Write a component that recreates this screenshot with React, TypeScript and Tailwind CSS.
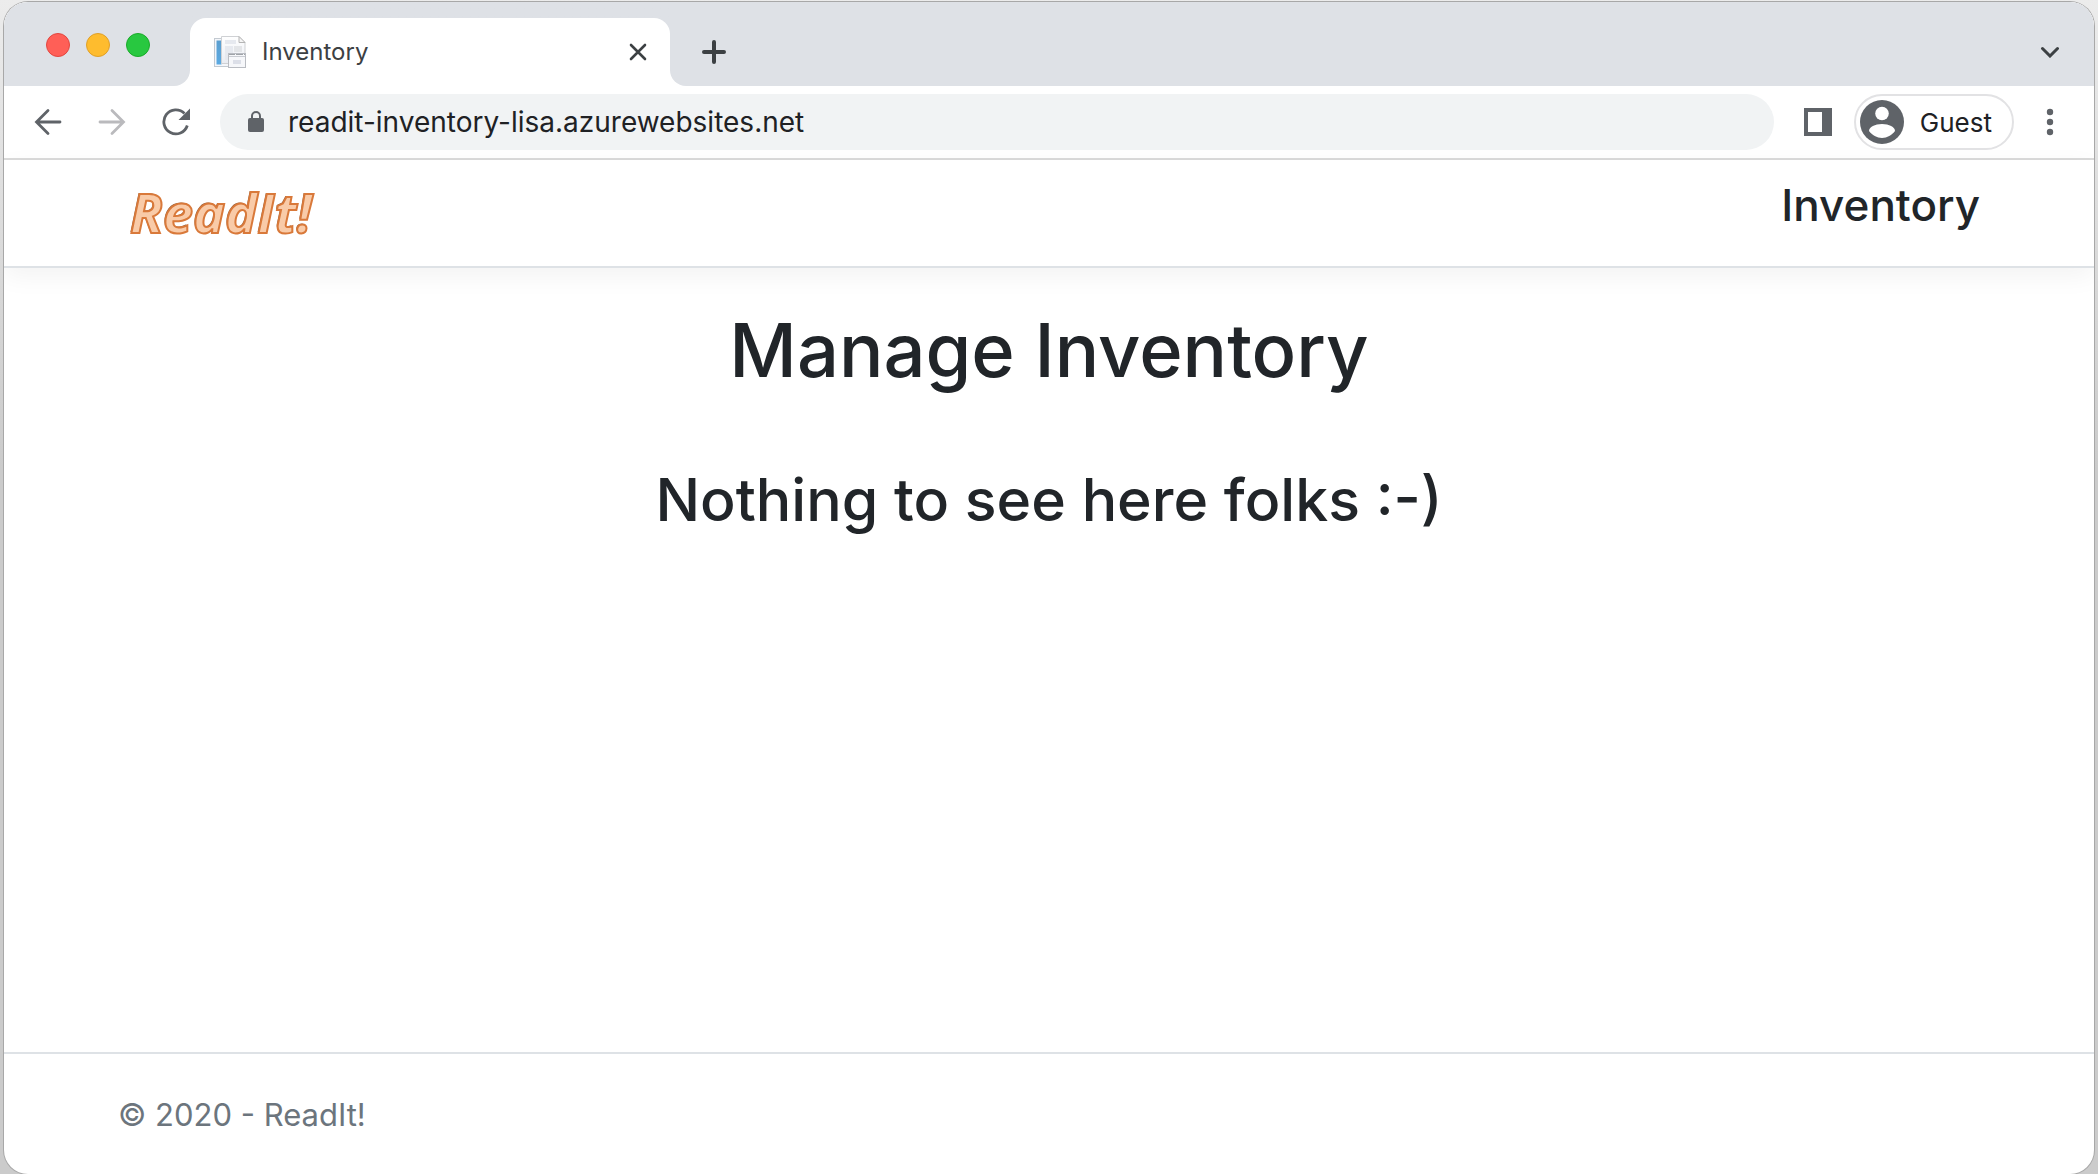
import React from "react";

function Favicon() {
  return (
    <svg viewBox="0 0 32 32" className="size-8 shrink-0" aria-hidden="true">
      <defs>
        <linearGradient id="page" x1="0" y1="0" x2="0" y2="1">
          <stop offset="0" stopColor="#ffffff" />
          <stop offset="1" stopColor="#e9ecf2" />
        </linearGradient>
        <linearGradient id="spine" x1="0" y1="0" x2="0" y2="1">
          <stop offset="0" stopColor="#5b9fd0" />
          <stop offset="1" stopColor="#5aa9e2" />
        </linearGradient>
      </defs>
      <rect x="0.5" y="2.5" width="26" height="28" fill="#f4f6fa" stroke="#c3cad1" />
      <rect x="2.5" y="4.5" width="5" height="24" fill="url(#spine)" />
      <path d="M7.5 0.5H25L31 6.500V27.500H7.500Z" fill="url(#page)" stroke="#cfd1d4" />
      <path d="M25 0.500V6.500H31Z" fill="#f5f5f5" stroke="#b4b4b4" />
      <rect x="11" y="4" width="11" height="4" fill="#e6e9ef" />
      <rect x="11" y="10" width="8" height="14" fill="#e6e9ef" />
      <rect x="20" y="10" width="8" height="6" fill="#e3e5e8" />
      <rect x="14.500" y="17.500" width="17" height="14" fill="#f6f7fa" stroke="#b9bcc2" />
      <path d="M15 20.500H31" stroke="#c9ccd2" />
      <path d="M15 18.500H31" stroke="#9fa3a8" strokeDasharray="6 1 7 1" />
      <rect x="19" y="24" width="8" height="4" fill="#dcdfe8" />
    </svg>
  );
}

function TabStrip() {
  return (
    <div className="flex h-[84px] bg-white">
      <div className="flex w-[186px] shrink-0 items-start gap-4 rounded-br-2xl bg-[#dee1e6] pt-[31px] pl-[42px]">
        <button aria-label="Close window" className="size-6 rounded-full border border-[#e2463f] bg-[#ff5f57]" />
        <button aria-label="Minimize window" className="size-6 rounded-full border border-[#e0a028] bg-[#febc2e]" />
        <button aria-label="Zoom window" className="size-6 rounded-full border border-[#1aab29] bg-[#28c840]" />
      </div>
      <div className="w-[480px] shrink-0 bg-linear-to-b from-[#dee1e6] from-50% to-white to-50% pt-4">
        <div className="flex h-[68px] items-center rounded-t-2xl bg-white pr-5 pl-6">
          <Favicon />
          <span className="ml-4 flex-1 text-2xl text-[#3c4043]">Inventory</span>
          <button aria-label="Close tab" className="p-1">
            <svg viewBox="0 0 16 16" className="size-4 overflow-visible" fill="none" stroke="#3c4043" strokeWidth="2.600" strokeLinecap="round">
              <path d="M1 1L15 15M15 1L1 15" />
            </svg>
          </button>
        </div>
      </div>
      <div className="flex flex-1 items-center justify-between rounded-bl-2xl bg-[#dee1e6] pt-4 pr-[34px] pl-8">
        <button aria-label="New tab">
          <svg viewBox="0 0 24 24" className="size-6" fill="none" stroke="#3c4043" strokeWidth="4" strokeLinecap="round">
            <path d="M2 12H22M12 2V22" />
          </svg>
        </button>
        <button aria-label="Search tabs">
          <svg viewBox="0 0 20 12" className="h-3 w-5" fill="none" stroke="#3c4043" strokeWidth="3" strokeLinecap="round">
            <path d="M2.500 2.500L10 10L17.500 2.500" />
          </svg>
        </button>
      </div>
    </div>
  );
}

function Toolbar() {
  return (
    <div className="flex h-[74px] items-center border-b-2 border-[#dadada] bg-white pr-10 pl-[30px]">
      <button aria-label="Back">
        <svg viewBox="0 0 28 28" className="size-7" fill="none" stroke="#5f6368" strokeWidth="2.800" strokeLinecap="round">
          <path d="M26 14H3M14 2.500L2.500 14L14 25.500" />
        </svg>
      </button>
      <button aria-label="Forward" className="ml-9">
        <svg viewBox="0 0 28 28" className="size-7" fill="none" stroke="#bababd" strokeWidth="2.800" strokeLinecap="round">
          <path d="M2 14H25M14 2.500L25.500 14L14 25.500" />
        </svg>
      </button>
      <button aria-label="Reload" className="ml-9">
        <svg viewBox="0 0 28 28" className="size-7" fill="none">
          <path d="M25.300 17.500A12 12 0 1 1 22.500 5.500" stroke="#5f6368" strokeWidth="2.800" />
          <path d="M28 0.500V12H16.500Z" fill="#5f6368" />
        </svg>
      </button>
      <label className="ml-[30px] flex h-14 flex-1 items-center rounded-full bg-[#f1f3f4] pl-7">
        <svg viewBox="0 0 16 22" className="h-[22px] w-4 shrink-0" role="img" aria-label="Secure">
          <rect x="0" y="7" width="16" height="14" rx="2" fill="#5f6368" />
          <path d="M4 8V5A4 4 0 0 1 12 5V8" fill="none" stroke="#5f6368" strokeWidth="2" />
        </svg>
        <input
          type="text"
          aria-label="Address"
          defaultValue="readit-inventory-lisa.azurewebsites.net"
          className="ml-6 w-full bg-transparent text-[28px] text-[#202124] outline-none"
        />
      </label>
      <button aria-label="Side panel" className="ml-[30px]">
        <svg viewBox="0 0 28 28" className="size-7">
          <path fillRule="evenodd" d="M0 0H28V28H0ZM4 4V24H18V4Z" fill="#5f6368" />
        </svg>
      </button>
      <button className="ml-[22px] flex h-14 items-center rounded-full border-2 border-[#e2e2e4] pr-5 pl-1">
        <svg viewBox="0 0 44 44" className="size-11" aria-hidden="true">
          <circle cx="22" cy="22" r="22" fill="#5f6368" />
          <circle cx="22" cy="13.500" r="6.800" fill="#fff" />
          <path d="M9 31C9 27 15 24 22 24S35 27 35 31C32 35 27 38 22 38S12 35 9 31Z" fill="#fff" />
        </svg>
        <span className="ml-4 text-[26px] text-[#202124]">Guest</span>
      </button>
      <button aria-label="Menu" className="ml-8">
        <svg viewBox="0 0 8 28" className="h-7 w-2 overflow-visible" fill="#5f6368">
          <circle cx="4" cy="4" r="3.200" />
          <circle cx="4" cy="14" r="3.200" />
          <circle cx="4" cy="24" r="3.200" />
        </svg>
      </button>
    </div>
  );
}

export default function App() {
  return (
    <div className="flex min-h-screen flex-col bg-linear-to-b from-[#ececec] to-[#cbcbcb] to-40% px-1 pt-0.5 font-['Inter',sans-serif]">
      <div className="flex flex-1 flex-col overflow-hidden rounded-3xl bg-white shadow-[0_0_0_1px_#a8a8a8]">
        <TabStrip />
        <Toolbar />
        <header className="flex items-start justify-between border-b-2 border-[#dee2e6] px-[114px] pt-4 pb-[18px] shadow-[0_8px_24px_rgba(0,0,0,0.05)]">
          <a
            href="#home"
            className="pl-3 font-['Open_Sans',sans-serif] text-[54px] leading-[72px] font-bold text-[#f9cba8] italic [-webkit-text-stroke:2px_#d9793a] [text-shadow:-1px_-1px_0_#96633f]"
          >
            ReadIt!
          </a>
          <a href="#inventory" className="text-[44px] leading-[58px] font-medium text-[#212529]">
            Inventory
          </a>
        </header>
        <main className="flex-1 text-center font-medium text-[#212529]">
          <h1 className="pt-[34px] text-[74px] leading-[96px]">Manage Inventory</h1>
          <h2 className="pt-16 text-[59px] leading-[76px]">Nothing to see here folks :-)</h2>
        </main>
        <footer className="border-t-2 border-[#dee2e6] px-[114px] pt-0.5 text-[31px] leading-[118px] text-[#6c757d]">
          © 2020 - ReadIt!
        </footer>
      </div>
    </div>
  );
}
